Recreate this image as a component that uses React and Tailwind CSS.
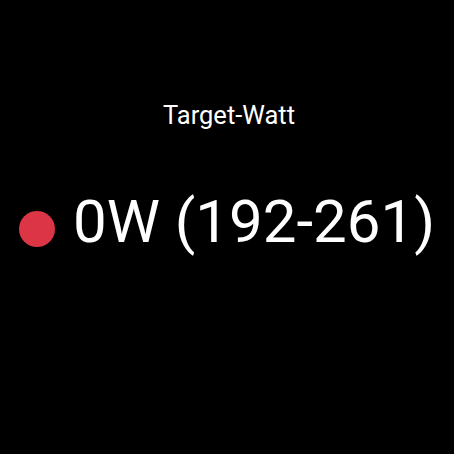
export default function App() {
  return (
    <div className="flex h-[454px] w-[454px] flex-col items-center bg-black text-white font-['Roboto',sans-serif]">
      <div className="mt-[100px] pl-[4px] text-[25.5px] leading-[30px]">Target-Watt</div>
      <div className="mt-[57px] flex items-start gap-[18px]">
        <span className="mt-[24px] block h-9 w-9 shrink-0 rounded-full bg-[#dc3545]" />
        <span className="text-[60px] leading-[70px]">0W (192-261)</span>
      </div>
    </div>
  );
}
